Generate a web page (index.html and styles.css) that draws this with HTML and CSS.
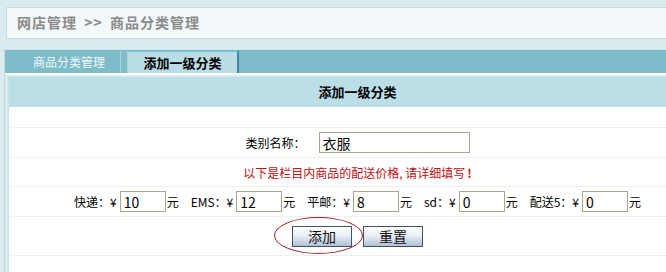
FILE: index.html
```html
<!DOCTYPE html>
<html lang="zh-CN">
<head>
    <meta charset="UTF-8">
    <title>商品分类管理</title>
    <link rel="stylesheet" href="styles.css">
</head>
<body>
    <div class="page">
        <div class="crumb">网店管理 &gt;&gt; 商品分类管理</div>

        <div class="frame">
            <div class="tabs">
                <div class="tab">商品分类管理</div>
                <div class="tab active">添加一级分类</div>
            </div>

            <div class="panel">
                <div class="head">添加一级分类</div>
                <div class="row row-empty"></div>
                <div class="row">
                    <span class="label">类别名称：</span>
                    <input class="txt name" type="text" value="衣服">
                </div>
                <div class="row note">以下是栏目内商品的配送价格, 请详细填写<b>!</b></div>
                <div class="row fees">
                    <div class="fee"><span>快递：¥</span><input class="txt price" type="text" value="10"><span>元</span></div>
                    <div class="fee"><span>EMS：¥</span><input class="txt price" type="text" value="12"><span>元</span></div>
                    <div class="fee"><span>平邮：¥</span><input class="txt price" type="text" value="8"><span>元</span></div>
                    <div class="fee"><span>sd：¥</span><input class="txt price" type="text" value="0"><span>元</span></div>
                    <div class="fee"><span>配送5：¥</span><input class="txt price" type="text" value="0"><span>元</span></div>
                </div>
                <div class="row actions">
                    <div class="btn-wrap">
                        <button class="btn">添加</button>
                        <span class="circle"></span>
                    </div>
                    <button class="btn">重置</button>
                </div>
            </div>
        </div>
    </div>
</body>
</html>
```

FILE: styles.css
```css
* {
    margin: 0;
    padding: 0;
    box-sizing: border-box;
}

body {
    background-color: #dbecf1;
    font-family: "Noto Sans CJK SC", "DejaVu Sans", sans-serif;
    font-size: 12px;
    color: #000;
    overflow: hidden;
}

.page {
    width: 706px;
    padding-top: 7px;
}

.crumb {
    margin-left: 6px;
    height: 32px;
    border: 1px solid #c3dde4;
    background: #f3f8fb;
    color: #8a8a8a;
    font-size: 14px;
    font-weight: bold;
    letter-spacing: 1px;
    word-spacing: 3px;
    line-height: 28px;
    padding-left: 10px;
}

.frame {
    margin: 10px 0 0 4px;
    border-left: 1px solid #bcd9e1;
}

.tabs {
    display: flex;
    height: 26px;
    background: #7fbcc9;
    border-top: 1px solid #c6e6ec;
    border-bottom: 2px solid #fff;
}

.tab {
    width: 116px;
    color: #eef8fa;
    line-height: 22px;
    padding-left: 28px;
    border-top: 1px solid #7fbcc9;
    border-right: 1px solid #a9d3dc;
}

.tab.active {
    width: 112px;
    margin-left: 6px;
    padding-left: 0;
    text-align: center;
    background: #b9dde5;
    color: #000;
    font-weight: bold;
    font-size: 13px;
    border-top: 2px solid #7fbcc9;
    border-right: 2px solid #3f8a9c;
    border-left: 1px solid #a9d3dc;
    line-height: 21px;
}

.panel {
    margin-left: 3px;
    border-left: 1px solid #c6e2e9;
    background: #fff;
    min-height: 200px;
}

.head {
    height: 32px;
    border-top: 2px solid #d3ebf0;
    background: #bcdee6;
    text-align: center;
    font-weight: bold;
    font-size: 13px;
    line-height: 29px;
}

.row {
    display: flex;
    align-items: center;
    justify-content: center;
    height: 30px;
    border-bottom: 1px solid #e7f2f5;
}

.row-empty {
    height: 21px;
}

.label {
    margin-right: 13px;
}

.txt {
    border: 1px solid #a7a88a;
    background: #fff;
    font-family: "Noto Sans CJK SC", "DejaVu Sans", sans-serif;
    font-size: 14px;
    padding-left: 3px;
    color: #000;
    outline: none;
}

.name {
    width: 151px;
    height: 21px;
    line-height: 19px;
}

.note {
    height: 29px;
    color: #c40f0f;
}

.note b {
    margin-left: 2px;
}

.fees {
    gap: 12px;
}

.fee {
    display: flex;
    align-items: center;
}

.price {
    width: 46px;
    height: 21px;
    margin: 0 1px 0 3px;
    line-height: 19px;
}

.actions {
    height: 39px;
    gap: 11px;
}

.btn-wrap {
    position: relative;
    display: flex;
}

.btn {
    width: 60px;
    height: 21px;
    border: 1px solid #3d5364;
    background: linear-gradient(#ffffff, #e9eef5 45%, #b3c1d5);
    font-family: "Noto Sans CJK SC", "DejaVu Sans", sans-serif;
    font-size: 14px;
    line-height: 18px;
    color: #111;
}

.circle {
    position: absolute;
    left: -18px;
    top: -9px;
    width: 89px;
    height: 37px;
    border: 1px solid #a3202e;
    border-radius: 50%;
    pointer-events: none;
}
```
